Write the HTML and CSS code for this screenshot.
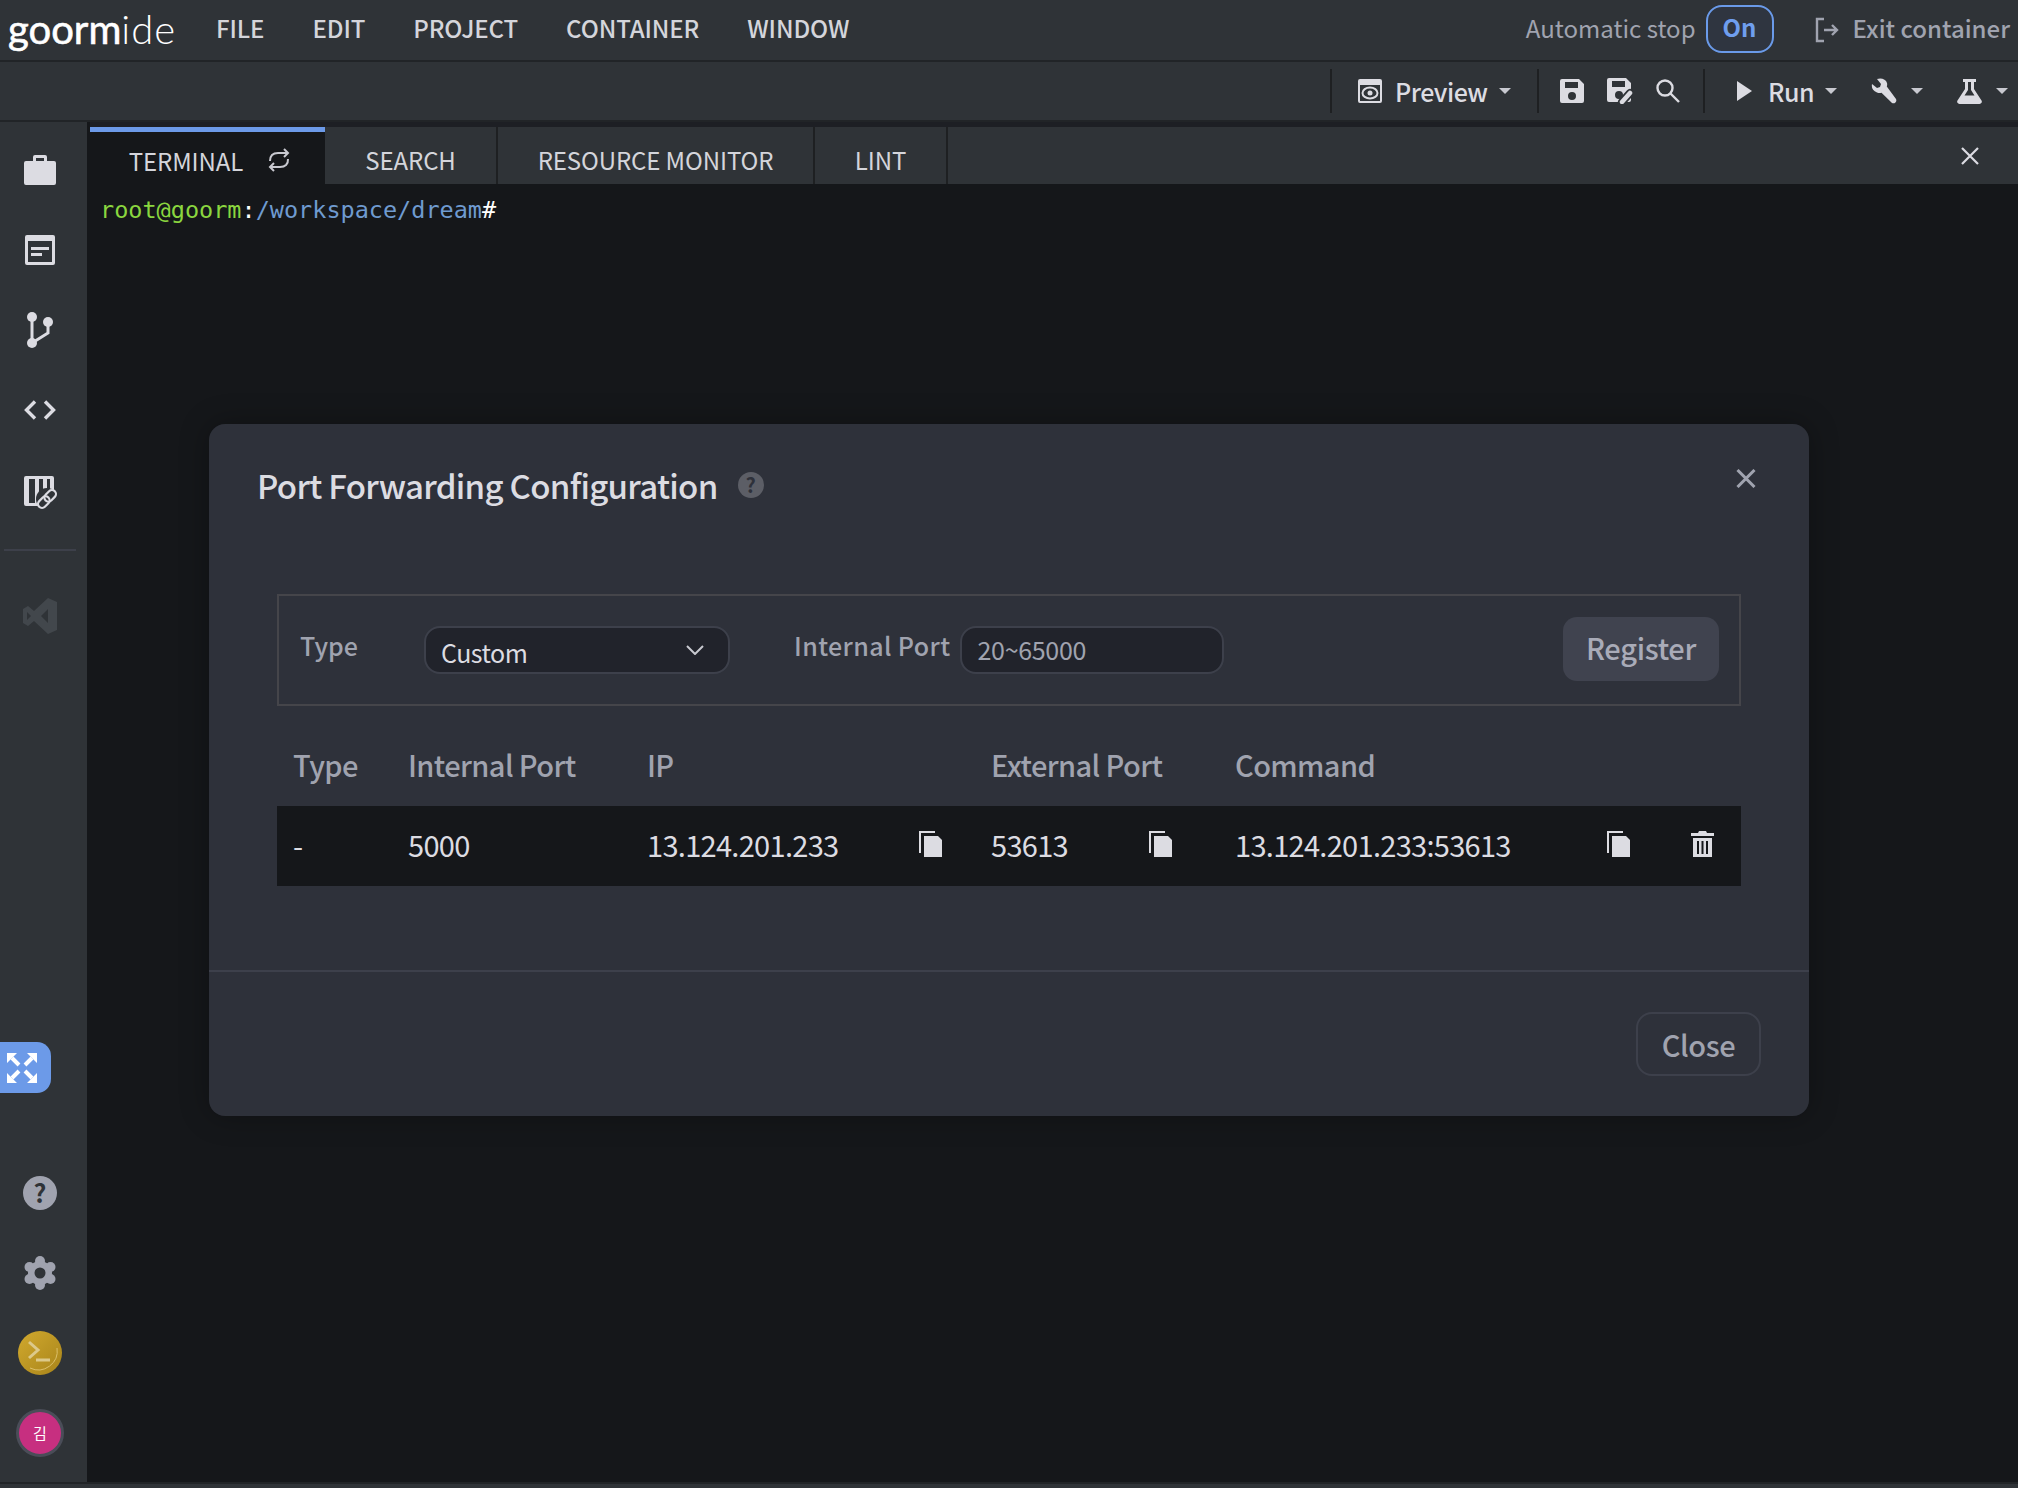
FILE: index.html
```html
<!DOCTYPE html>
<html lang="en">
<head>
    <meta charset="UTF-8">
    <title>goormIDE</title>
    <link rel="stylesheet" href="styles.css">
</head>
<body>
    <div class="app">
        <header class="menubar">
            <div class="logo"><b>goorm</b><span>ide</span></div>
            <nav class="menu">
                <span>FILE</span>
                <span>EDIT</span>
                <span>PROJECT</span>
                <span>CONTAINER</span>
                <span>WINDOW</span>
            </nav>
            <div class="autostop">
                <span class="autostop-label">Automatic stop</span>
                <span class="on-btn">On</span>
            </div>
            <div class="exit">
                <svg width="24" height="26" viewBox="0 0 24 26" fill="none" stroke="#a0a3af" stroke-width="2.4"><path d="M9 2H2v22h7"/><path d="M9 13h13M17 8l5 5-5 5"/></svg>
                <span class="exit-label">Exit container</span>
            </div>
        </header>

        <div class="toolbar">
            <div class="tool-group preview-group">
                <svg width="24" height="24" viewBox="0 0 24 24"><path fill="#dcdce2" fill-rule="evenodd" d="M2 0h20a2 2 0 0 1 2 2v20a2 2 0 0 1-2 2H2a2 2 0 0 1-2-2V2a2 2 0 0 1 2-2zm0 6v16h20V6z"/><ellipse cx="12" cy="14" rx="7.500" ry="5.500" fill="none" stroke="#dcdce2" stroke-width="2"/><circle cx="12" cy="14" r="2.500" fill="#dcdce2"/></svg>
                <span class="tool-label">Preview</span>
                <i class="caret"></i>
            </div>
            <div class="tool-group save-group">
                <svg width="24" height="24" viewBox="0 0 24 24"><path fill="#dcdce2" fill-rule="evenodd" d="M2 0h17l5 5v17a2 2 0 0 1-2 2H2a2 2 0 0 1-2-2V2a2 2 0 0 1 2-2zm3 3v6h13V3zm7 10a4 4 0 1 0 0 8 4 4 0 0 0 0-8z"/></svg>
                <svg width="26" height="26" viewBox="0 0 26 26"><path fill="#dcdce2" fill-rule="evenodd" d="M2 0h17l5 5v17a2 2 0 0 1-2 2H2a2 2 0 0 1-2-2V2a2 2 0 0 1 2-2zm3 3v6h13V3zm7 10a4 4 0 1 0 0 8 4 4 0 0 0 0-8z"/><path d="M15 24l8-9" stroke="#2f3337" stroke-width="8" stroke-linecap="round"/><path d="M15 24l8-9" stroke="#dcdce2" stroke-width="4.500" stroke-linecap="round"/></svg>
                <svg width="24" height="24" viewBox="0 0 24 24" fill="none" stroke="#dcdce2" stroke-width="2.400"><circle cx="9" cy="9" r="7.500"/><path d="M14.500 14.500L23 23"/></svg>
            </div>
            <div class="tool-group run-group">
                <div class="tool-item run-item">
                    <svg width="15" height="20" viewBox="0 0 15 20"><path fill="#dcdce2" d="M0 0l15 10L0 20z"/></svg>
                    <span class="tool-label">Run</span>
                    <i class="caret"></i>
                </div>
                <div class="tool-item">
                    <svg width="26" height="26" viewBox="0 0 26 26"><path fill="#dcdce2" d="M1 6l5 4 3-1 1-3-4-5c4-1.500 9 0 10 4 .3 1.500.2 2.500-.2 3.500L25 21a3 3 0 0 1-4 4L10.500 14.800c-1.500.4-3 .4-4.500-.3C2 13 .2 10 1 6z"/></svg>
                    <i class="caret"></i>
                </div>
                <div class="tool-item">
                    <svg width="25" height="25" viewBox="0 0 25 25"><path fill="#dcdce2" fill-rule="evenodd" d="M6 0h13v3h-2v7l7.500 11.500A2.300 2.300 0 0 1 22.500 25h-20A2.300 2.300 0 0 1 .5 21.500L8 10V3H6zm5 3v8L7.500 16.500h10L14 11V3z"/></svg>
                    <i class="caret"></i>
                </div>
            </div>
        </div>

        <div class="main">
            <aside class="sidebar">
                <div class="side-top">
                    <svg class="side-icon" width="32" height="30" viewBox="0 0 32 30"><path fill="#dcdce2" d="M2 6h7V2a2 2 0 0 1 2-2h10a2 2 0 0 1 2 2v4h7a2 2 0 0 1 2 2v20a2 2 0 0 1-2 2H2a2 2 0 0 1-2-2V8a2 2 0 0 1 2-2zm10-3v3h8V3z"/></svg>
                    <svg class="side-icon" width="30" height="30" viewBox="0 0 30 30"><path fill="#dcdce2" fill-rule="evenodd" d="M2 0h26a2 2 0 0 1 2 2v26a2 2 0 0 1-2 2H2a2 2 0 0 1-2-2V2a2 2 0 0 1 2-2zm1 6v21h24V6z"/><path fill="#dcdce2" d="M6 12h18v3H6zM6 18h11v3H6z"/></svg>
                    <svg class="side-icon" width="26" height="36" viewBox="0 0 26 36"><circle cx="5" cy="5" r="5" fill="#dcdce2"/><circle cx="5" cy="31" r="5" fill="#dcdce2"/><circle cx="21" cy="10" r="5" fill="#dcdce2"/><path d="M5 5v26M21 10v11l-16 10" fill="none" stroke="#dcdce2" stroke-width="3"/></svg>
                    <svg class="side-icon" width="32" height="20" viewBox="0 0 32 20" fill="none" stroke="#dcdce2" stroke-width="3.400"><path d="M11 1.500L2.500 10l8.500 8.500M21 1.500l8.500 8.500-8.500 8.500"/></svg>
                    <svg class="side-icon lib-icon" width="34" height="34" viewBox="0 0 34 34">
                        <path fill="#dcdce2" fill-rule="evenodd" d="M2 0h26a2 2 0 0 1 2 2v26a2 2 0 0 1-2 2H2a2 2 0 0 1-2-2V2a2 2 0 0 1 2-2zm3 3v24h6V3zm10 0v24h4V3zm8 0v14h3V3z"/>
                        <circle cx="23" cy="23" r="11" fill="#2f3337"/>
                        <g fill="none" stroke="#dcdce2" stroke-width="2.200" transform="rotate(-45 23 23)"><rect x="12" y="19" width="13" height="8" rx="4"/><rect x="21" y="19" width="13" height="8" rx="4"/></g>
                    </svg>
                    <div class="side-divider"></div>
                    <svg class="vscode-icon" width="36" height="36" viewBox="0 0 36 36"><path fill="#42474c" fill-rule="evenodd" d="M26 0l9 4v28l-9 4-14-13-6 5-5-3v-14l5-3 6 5zm0 11l-7 7 7 7zM5 14v8l4-4z"/></svg>
                </div>
                <div class="expand-btn">
                    <svg width="30" height="30" viewBox="0 0 30 30" fill="#fff" stroke="#fff" stroke-width="0">
                        <path d="M0 0h10L0 10zM30 0v10L20 0zM0 30V20l10 10zM30 30H20l10-10z"/>
                        <path d="M5 5l7 7M25 5l-7 7M5 25l7-7M25 25l-7-7" stroke-width="4"/>
                    </svg>
                </div>
                <div class="side-bottom">
                    <span class="help-circle">?</span>
                    <svg class="gear" width="32" height="34" viewBox="0 0 32 34">
                        <g fill="#a0a3af"><circle cx="16" cy="17" r="12"/><circle cx="16" cy="5" r="5"/><circle cx="16" cy="29" r="5"/><circle cx="5.500" cy="11" r="5"/><circle cx="26.500" cy="11" r="5"/><circle cx="5.500" cy="23" r="5"/><circle cx="26.500" cy="23" r="5"/></g>
                        <circle cx="16" cy="17" r="5.500" fill="#2f3337"/>
                    </svg>
                    <svg class="coin" width="44" height="44" viewBox="0 0 44 44">
                        <defs><linearGradient id="coin" x1="0" y1="0" x2="1" y2="1"><stop offset="0" stop-color="#d1a92e"/><stop offset="1" stop-color="#a8841a"/></linearGradient></defs>
                        <circle cx="22" cy="22" r="22" fill="url(#coin)"/>
                        <path d="M12 37a19 19 0 0 0 27-20" fill="none" stroke="#dcc06a" stroke-width="1"/>
                        <path d="M11 11l9 8-9 8" fill="none" stroke="#dcc98a" stroke-width="3"/>
                        <path d="M18 29h14" stroke="#dcc98a" stroke-width="3"/>
                    </svg>
                    <span class="avatar">김</span>
                </div>
            </aside>

            <section class="panel">
                <div class="tabs">
                    <div class="tab active">
                        <span>TERMINAL</span>
                        <svg width="24" height="24" viewBox="0 0 24 24" fill="none" stroke="#c8c9d0" stroke-width="2"><path d="M3 13a8 8 0 0 1 2-6c2-2 4-2 6-2h10M17 1l4 4-4 4"/><path d="M21 11a8 8 0 0 1-2 6c-2 2-4 2-6 2H3M7 23l-4-4 4-4"/></svg>
                    </div>
                    <div class="tab search-tab">SEARCH</div>
                    <div class="tab monitor-tab">RESOURCE MONITOR</div>
                    <div class="tab lint-tab">LINT</div>
                    <svg class="panel-close" width="18" height="18" viewBox="0 0 18 18" stroke="#dcdce2" stroke-width="2.200"><path d="M1 1l16 16M17 1L1 17"/></svg>
                </div>
                <div class="terminal"><span class="t-green">root@goorm</span>:<span class="t-blue">/workspace/dream</span>#</div>
            </section>
        </div>
        <div class="statusbar"></div>
    </div>

    <div class="modal">
        <div class="modal-head">
            <h2>Port Forwarding Configuration</h2>
            <span class="modal-help">?</span>
            <svg class="modal-x" width="20" height="19" viewBox="0 0 20 19" stroke="#a0a3af" stroke-width="3"><path d="M1.500 1l17 17M18.500 1l-17 17"/></svg>
        </div>
        <div class="modal-body">
            <div class="form-box">
                <label class="type-label">Type</label>
                <div class="select">
                    <span class="select-value">Custom</span>
                    <svg width="18" height="10" viewBox="0 0 18 10" fill="none" stroke="#c8c9d0" stroke-width="2"><path d="M1 1l8 8 8-8"/></svg>
                </div>
                <label class="port-label">Internal Port</label>
                <div class="port-input">20~65000</div>
                <div class="register-btn">Register</div>
            </div>

            <div class="table-row table-head">
                <div>Type</div>
                <div>Internal Port</div>
                <div>IP</div>
                <div>External Port</div>
                <div>Command</div>
            </div>
            <div class="table-row table-data">
                <div>-</div>
                <div>5000</div>
                <div class="cell-ip">
                    <span>13.124.201.233</span>
                    <svg class="copy-icon" width="23" height="26" viewBox="0 0 23 26"><path fill="#dcdce2" d="M0 0h16v2H2v20H0z"/><path fill="#dcdce2" d="M5 5h14l4 4v17H5z"/></svg>
                </div>
                <div class="cell-port">
                    <span>53613</span>
                    <svg class="copy-icon" width="23" height="26" viewBox="0 0 23 26"><path fill="#dcdce2" d="M0 0h16v2H2v20H0z"/><path fill="#dcdce2" d="M5 5h14l4 4v17H5z"/></svg>
                </div>
                <div class="cell-command">
                    <span>13.124.201.233:53613</span>
                    <svg class="copy-icon" width="23" height="26" viewBox="0 0 23 26"><path fill="#dcdce2" d="M0 0h16v2H2v20H0z"/><path fill="#dcdce2" d="M5 5h14l4 4v17H5z"/></svg>
                    <svg class="trash-icon" width="23" height="26" viewBox="0 0 23 26"><path fill="#dcdce2" fill-rule="evenodd" d="M8 0h7l1 2h7v3H0V2h7zM2 7h19v19H2zm4 3v13h2V10zm4.500 0v13h2V10zm4.500 0v13h2V10z"/></svg>
                </div>
            </div>
        </div>
        <div class="modal-foot">
            <div class="close-btn">Close</div>
        </div>
    </div>
</body>
</html>
```

FILE: styles.css
```css
* {
    box-sizing: border-box;
}

body {
    margin: 0;
    width: 2018px;
    height: 1488px;
    overflow: hidden;
    background: #15171a;
    color: #dcdce2;
    font-family: "Noto Sans CJK KR", "Noto Sans", sans-serif;
}

svg {
    display: block;
    flex: none;
}

.app {
    display: flex;
    flex-direction: column;
    height: 1488px;
}

/* top menu */
.menubar {
    display: flex;
    align-items: center;
    height: 62px;
    padding: 0 8px;
    background: #2f3337;
    border-bottom: 2px solid #212427;
}

.logo {
    width: 208px;
    font-family: Lato, sans-serif;
    font-size: 40px;
    line-height: 50px;
    color: #fff;
    margin-bottom: 2px;
}

.logo b {
    font-weight: 400;
    -webkit-text-stroke: 0.6px #fff;
}

.logo span {
    font-weight: 300;
    letter-spacing: 1px;
}

.menu {
    display: flex;
    gap: 48px;
    margin-bottom: 6px;
    font-size: 24px;
    font-weight: 500;
    letter-spacing: -0.1px;
    color: #d4d5db;
}

.autostop {
    display: flex;
    align-items: center;
    gap: 10px;
    margin-left: auto;
    font-size: 24px;
    color: #a0a3af;
}

.autostop-label {
    margin-bottom: 6px;
}

.on-btn {
    width: 68px;
    height: 48px;
    margin-bottom: 2px;
    line-height: 40px;
    text-align: center;
    color: #6f9eee;
    background: #2f3540;
    border: 2px solid #6a9ae8;
    border-radius: 16px;
    font-weight: 700;
}

.exit {
    display: flex;
    align-items: center;
    gap: 14px;
    margin-left: 41px;
    font-size: 24px;
    font-weight: 500;
    color: #a0a3af;
}

.exit-label {
    margin-bottom: 6px;
}

/* tool row */
.toolbar {
    display: flex;
    justify-content: flex-end;
    align-items: center;
    height: 60px;
    background: #2f3337;
    border-bottom: 2px solid #212427;
}

.tool-group {
    display: flex;
    align-items: center;
    height: 44px;
    border-left: 2px solid #1e2022;
}

.preview-group {
    width: 207px;
    padding-left: 26px;
}

.save-group {
    width: 166px;
    gap: 23px;
    padding-left: 21px;
}

.run-group {
    width: 315px;
    padding-left: 32px;
    gap: 34px;
}

.tool-item {
    display: flex;
    align-items: center;
    gap: 14px;
}

.run-item {
    gap: 11px;
}

.tool-label {
    margin-left: 13px;
    font-size: 25px;
    font-weight: 500;
    letter-spacing: -0.5px;
    color: #dcdce2;
}

.run-item .tool-label {
    margin-left: 5px;
}

.preview-group .caret {
    margin-left: 11px;
}

.caret {
    display: block;
    width: 0;
    height: 0;
    border-left: 6px solid transparent;
    border-right: 6px solid transparent;
    border-top: 6px solid #c8c9d0;
}

/* left rail + panel */
.main {
    flex: 1;
    display: flex;
    min-height: 0;
}

.sidebar {
    width: 87px;
    display: flex;
    flex-direction: column;
    align-items: center;
    padding: 33px 7px 0 0;
    background: #2f3337;
}

.side-top {
    display: flex;
    flex-direction: column;
    align-items: center;
    width: 100%;
}

.side-top .side-icon:nth-child(1) {
    margin-bottom: 50px;
}

.side-top .side-icon:nth-child(2) {
    margin-bottom: 47px;
}

.side-top .side-icon:nth-child(3) {
    margin-bottom: 52px;
}

.side-top .side-icon:nth-child(4) {
    margin-bottom: 56px;
}

.side-top .lib-icon {
    margin-bottom: 39px;
    margin-left: 2px;
}

.side-divider {
    flex: none;
    width: 72px;
    height: 2px;
    background: #3d404a;
    margin-bottom: 47px;
}

.expand-btn {
    align-self: flex-start;
    display: flex;
    align-items: center;
    justify-content: center;
    width: 51px;
    height: 51px;
    margin-top: 408px;
    padding-right: 8px;
    background: #6c9ae8;
    border-radius: 0 14px 14px 0;
}

.side-bottom {
    display: flex;
    flex-direction: column;
    align-items: center;
    margin-top: 83px;
}

.help-circle {
    width: 34px;
    height: 34px;
    margin-bottom: 46px;
    border-radius: 50%;
    background: #a0a3af;
    color: #2f3337;
    font-weight: 700;
    font-size: 25px;
    line-height: 33px;
    text-align: center;
}

.gear {
    margin-bottom: 41px;
}

.coin {
    margin-bottom: 34px;
}

.avatar {
    width: 48px;
    height: 48px;
    border-radius: 50%;
    background: #c72f80;
    border: 3px solid #4a4d58;
    color: #fff;
    font-size: 15px;
    line-height: 41px;
    text-align: center;
}

.panel {
    flex: 1;
    display: flex;
    flex-direction: column;
    margin-left: 3px;
    padding-top: 5px;
    background: #1d1f24;
}

.tabs {
    display: flex;
    align-items: stretch;
    height: 57px;
    background: #2f3337;
    position: relative;
}

.tab {
    display: flex;
    align-items: center;
    justify-content: center;
    gap: 24px;
    padding-top: 8px;
    font-size: 24px;
    letter-spacing: -0.1px;
    color: #d4d5db;
    border-right: 2px solid #1e2022;
}

.tab.active {
    width: 235px;
    padding: 4px 0 0 5px;
    background: #15171a;
    border-top: 5px solid #6c9ae8;
    border-right: 0;
}

.search-tab {
    width: 173px;
}

.monitor-tab {
    width: 317px;
}

.lint-tab {
    width: 133px;
}

.panel-close {
    position: absolute;
    top: 20px;
    right: 39px;
}

.terminal {
    flex: 1;
    padding: 11px 10px;
    background: #15171a;
    font-family: "DejaVu Sans Mono", monospace;
    font-size: 23.5px;
    line-height: 30px;
    color: #fff;
}

.t-green {
    color: #8ad63f;
}

.t-blue {
    color: #6f9bd0;
}

.statusbar {
    height: 6px;
    background: #2f3337;
    border-top: 2px solid #212427;
}

/* port forwarding dialog */
.modal {
    position: absolute;
    left: 209px;
    top: 424px;
    width: 1600px;
    height: 692px;
    background: #2e313a;
    border-radius: 16px;
    box-shadow: 0 0 30px rgba(0, 0, 0, 0.3);
}

.modal-head {
    display: flex;
    align-items: center;
    gap: 20px;
    height: 122px;
    padding-left: 48px;
    position: relative;
}

.modal-head h2 {
    margin: 0;
    font-size: 33px;
    font-weight: 500;
    letter-spacing: -0.7px;
    color: #dcdce2;
}

.modal-help {
    width: 26px;
    height: 26px;
    border-radius: 50%;
    background: #5c5e66;
    color: #2e313a;
    font-size: 20px;
    font-weight: 700;
    line-height: 25px;
    text-align: center;
}

.modal-x {
    position: absolute;
    top: 45px;
    right: 53px;
}

.modal-body {
    height: 426px;
    padding: 48px 68px 0;
    border-bottom: 2px solid #3d404b;
}

.form-box {
    display: flex;
    align-items: center;
    height: 112px;
    padding: 0 20px 0 21px;
    border: 2px solid #45454a;
    font-size: 25px;
    color: #a0a3af;
}

.type-label {
    width: 124px;
    margin-top: -11px;
    font-weight: 500;
}

.select {
    display: flex;
    align-items: center;
    justify-content: space-between;
    width: 306px;
    height: 48px;
    padding: 0 24px 0 15px;
    background: #21232b;
    border: 2px solid #3d404b;
    border-radius: 16px;
    color: #dcdce2;
    letter-spacing: -0.5px;
}

.select-value {
    margin-top: 3px;
}

.port-label {
    margin-left: 64px;
    margin-top: -11px;
    font-weight: 500;
    letter-spacing: 0.4px;
}

.port-input {
    width: 264px;
    height: 48px;
    margin-left: 10px;
    padding-left: 15px;
    line-height: 42px;
    background: #21232b;
    border: 2px solid #3d404b;
    border-radius: 16px;
    color: #a0a3af;
    letter-spacing: -0.3px;
}

.register-btn {
    margin-left: auto;
    margin-top: -3px;
    width: 156px;
    height: 64px;
    line-height: 60px;
    text-align: center;
    font-size: 29px;
    font-weight: 500;
    letter-spacing: -0.3px;
    background: #40434f;
    border-radius: 14px;
    color: #a9abb8;
}

.table-row {
    display: grid;
    grid-template-columns: 115px 239px 344px 244px 1fr;
    align-items: center;
}

.table-row > div {
    padding-left: 16px;
    font-size: 29px;
}

.table-head {
    height: 100px;
    padding-top: 15px;
    font-weight: 500;
    letter-spacing: -0.6px;
    color: #a0a3af;
}

.table-data {
    height: 80px;
    padding-bottom: 5px;
    background: #15171a;
    letter-spacing: -0.7px;
    color: #dcdce2;
}

.cell-ip,
.cell-port,
.cell-command {
    display: flex;
    align-items: center;
    justify-content: space-between;
}

.cell-ip {
    padding-right: 33px;
}

.cell-port {
    padding-right: 47px;
}

.cell-command {
    padding-right: 27px;
}

.cell-command .copy-icon {
    margin-left: auto;
    margin-right: 61px;
}

.modal-foot {
    display: flex;
    justify-content: flex-end;
    padding: 40px 48px 0 0;
}

.close-btn {
    width: 125px;
    height: 64px;
    line-height: 61px;
    text-align: center;
    font-size: 29px;
    font-weight: 500;
    letter-spacing: -0.4px;
    color: #a0a3af;
    border: 2px solid #3d404b;
    border-radius: 16px;
}
```
